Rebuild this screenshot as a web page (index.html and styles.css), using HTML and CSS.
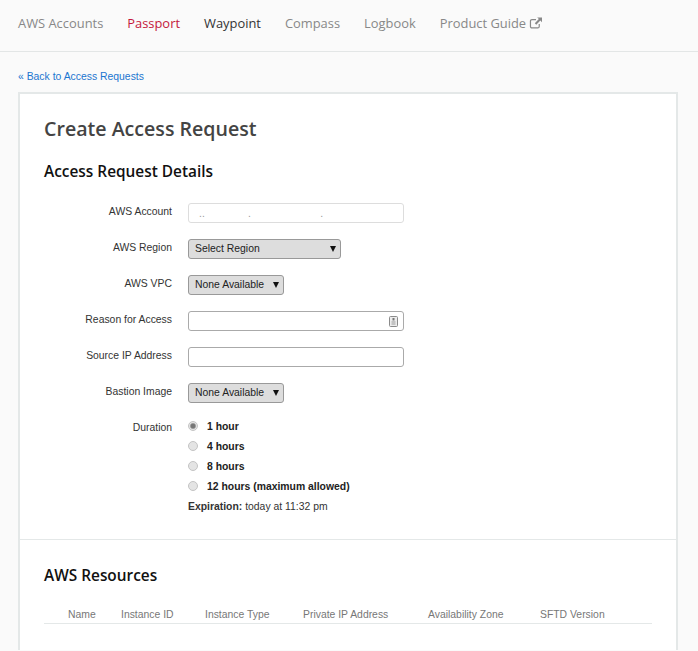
FILE: index.html
```html
<!DOCTYPE html>
<html>
<head>
  <meta charset="UTF-8">
  <title>Create Access Request</title>
  <link rel="stylesheet" href="styles.css">
</head>
<body>
  <nav class="topnav">
    <a href="#">AWS Accounts</a>
    <a href="#" class="nav-passport">Passport</a>
    <a href="#" class="nav-active">Waypoint</a>
    <a href="#">Compass</a>
    <a href="#">Logbook</a>
    <a href="#" class="nav-guide">Product Guide
      <svg class="ext-icon" width="14" height="12" viewBox="0 0 14 13">
        <path d="M10.5 7.5v2.7a1.6 1.6 0 0 1-1.6 1.6H2.6A1.6 1.6 0 0 1 1 10.200V4.400a1.600 1.600 0 0 1 1.600-1.600H7" fill="none" stroke="currentColor" stroke-width="1.300"/>
        <path d="M8.300 0.500H13.500V5.700L11.700 3.900 7.300 8.300 5.700 6.700 10.100 2.300Z" fill="currentColor"/>
      </svg>
    </a>
  </nav>

  <main class="page">
    <a href="#" class="back-link">« Back to Access Requests</a>

    <div class="card">
      <section class="card-section">
        <h1>Create Access Request</h1>
        <h2>Access Request Details</h2>

        <form class="form">
          <div class="form-row">
            <label>AWS Account</label>
            <input type="text" class="text-input account-input" value="..               .                        ." readonly>
          </div>
          <div class="form-row">
            <label>AWS Region</label>
            <div class="select-wrap region-select">
              <select><option>Select Region</option></select>
            </div>
          </div>
          <div class="form-row">
            <label>AWS VPC</label>
            <div class="select-wrap">
              <select><option>None Available</option></select>
            </div>
          </div>
          <div class="form-row">
            <label>Reason for Access</label>
            <div class="input-wrap">
              <input type="text" class="text-input">
              <svg class="field-icon" width="9" height="11" viewBox="0 0 9 11">
                <rect x="0.500" y="0.500" width="8" height="10" rx="1" fill="#ececec" stroke="#8a8a8a"/>
                <rect x="3.500" y="2" width="2" height="2.500" fill="#777"/>
                <rect x="2.500" y="5.500" width="4" height="1" fill="#999"/>
                <rect x="2.500" y="7.500" width="4" height="1" fill="#999"/>
              </svg>
            </div>
          </div>
          <div class="form-row">
            <label>Source IP Address</label>
            <input type="text" class="text-input">
          </div>
          <div class="form-row">
            <label>Bastion Image</label>
            <div class="select-wrap">
              <select><option>None Available</option></select>
            </div>
          </div>
          <div class="form-row duration-row">
            <label>Duration</label>
            <div class="duration">
              <label class="radio"><input type="radio" name="duration" checked> 1 hour</label>
              <label class="radio"><input type="radio" name="duration"> 4 hours</label>
              <label class="radio"><input type="radio" name="duration"> 8 hours</label>
              <label class="radio"><input type="radio" name="duration"> 12 hours (maximum allowed)</label>
              <p class="expiration"><b>Expiration:</b> today at 11:32 pm</p>
            </div>
          </div>
        </form>
      </section>

      <section class="card-section resources">
        <h2>AWS Resources</h2>
        <div class="resource-head">
          <span>Name</span>
          <span>Instance ID</span>
          <span>Instance Type</span>
          <span>Private IP Address</span>
          <span>Availability Zone</span>
          <span>SFTD Version</span>
        </div>
      </section>
    </div>
  </main>
</body>
</html>
```

FILE: styles.css
```css
html, body {
  height: 100%;
  overflow: hidden;
}

body {
  margin: 0;
  background-color: #fafafa;
  color: #333;
  font-family: "Liberation Sans", Arial, sans-serif;
  font-size: 10.400px;
}

a {
  text-decoration: none;
}

.topnav {
  display: flex;
  align-items: center;
  gap: 24px;
  box-sizing: content-box;
  height: 46px;
  padding: 0 18px 5px;
  border-bottom: 1px solid #e3e6e6;
  font-family: "Open Sans", sans-serif;
  font-size: 12.900px;
}

.topnav a {
  color: #888;
}

.topnav .nav-passport {
  color: #c4183c;
}

.topnav .nav-active {
  color: #333;
}

.ext-icon {
  vertical-align: -1px;
}

.page {
  padding: 18px 20px 0 18px;
}

.back-link {
  display: block;
  height: 22px;
  line-height: 14px;
  color: #1b75d0;
}

.card {
  box-sizing: border-box;
  height: 558px;
  background-color: #fff;
  border: 2px solid #e4e8e8;
  border-bottom: none;
}

.card-section {
  box-sizing: border-box;
  height: 446px;
  padding: 23px 24px 0;
  border-bottom: 1px solid #e4e8e8;
}

h1 {
  margin: 0;
  color: #444;
  font-family: "Open Sans", sans-serif;
  font-size: 19.600px;
  font-weight: 600;
  line-height: 24px;
}

h2 {
  margin: 21px 0 0;
  color: #111;
  font-family: "Open Sans", sans-serif;
  font-size: 15.400px;
  font-weight: 600;
  line-height: 20px;
}

.form {
  margin-top: 21px;
}

.form-row {
  display: flex;
  align-items: flex-start;
  height: 36px;
}

.form-row > label {
  flex: 0 0 128px;
  margin-right: 16px;
  text-align: right;
  line-height: 17px;
  color: #333;
}

.text-input {
  display: block;
  box-sizing: border-box;
  width: 216px;
  height: 20px;
  padding: 0 6px;
  background: #fff;
  border: 1px solid #aaa;
  border-radius: 3px;
  font-family: "Liberation Sans", sans-serif;
  font-size: 10.400px;
  outline: none;
}

.account-input {
  padding-left: 10px;
  border-color: #ddd;
  color: #999;
}

.input-wrap {
  position: relative;
}

.field-icon {
  position: absolute;
  top: 5px;
  right: 6px;
}

.select-wrap {
  position: relative;
  display: inline-block;
}

.select-wrap::after {
  content: "";
  position: absolute;
  top: 7px;
  right: 5px;
  border-left: 3px solid transparent;
  border-right: 3px solid transparent;
  border-top: 6px solid #111;
  pointer-events: none;
}

select {
  appearance: none;
  display: block;
  box-sizing: border-box;
  width: 96px;
  height: 20px;
  padding: 0 0 2px 6px;
  background: #ddd;
  border: 1px solid #999;
  border-radius: 3px;
  color: #222;
  font-family: "Liberation Sans", sans-serif;
  font-size: 10.400px;
}

.region-select select {
  width: 153px;
}

.duration-row {
  height: auto;
}

.duration {
  display: flex;
  flex-direction: column;
  margin-top: -3px;
}

.radio {
  display: flex;
  align-items: center;
  gap: 8px;
  height: 20px;
  font-weight: bold;
  color: #222;
}

.radio input {
  appearance: none;
  box-sizing: content-box;
  width: 8px;
  height: 8px;
  margin: 0 1px 0 0;
  background: #e4e4e4;
  border: 1px solid #c4c4c4;
  border-radius: 50%;
}

.radio input:checked {
  background: radial-gradient(circle, #777 0 2px, #e4e4e4 3.500px);
}

.expiration {
  margin: 1px 0 0;
  line-height: 20px;
}

.resources {
  height: auto;
  padding-top: 26px;
  border-bottom: none;
}

.resources h2 {
  margin-top: 0;
}

.resource-head {
  display: grid;
  grid-template-columns: 53px 84px 98px 125px 112px auto;
  margin-top: 22px;
  padding: 0 0 1px 24px;
  border-bottom: 1px solid #e4e8e8;
  color: #777;
  line-height: 14px;
}
```
